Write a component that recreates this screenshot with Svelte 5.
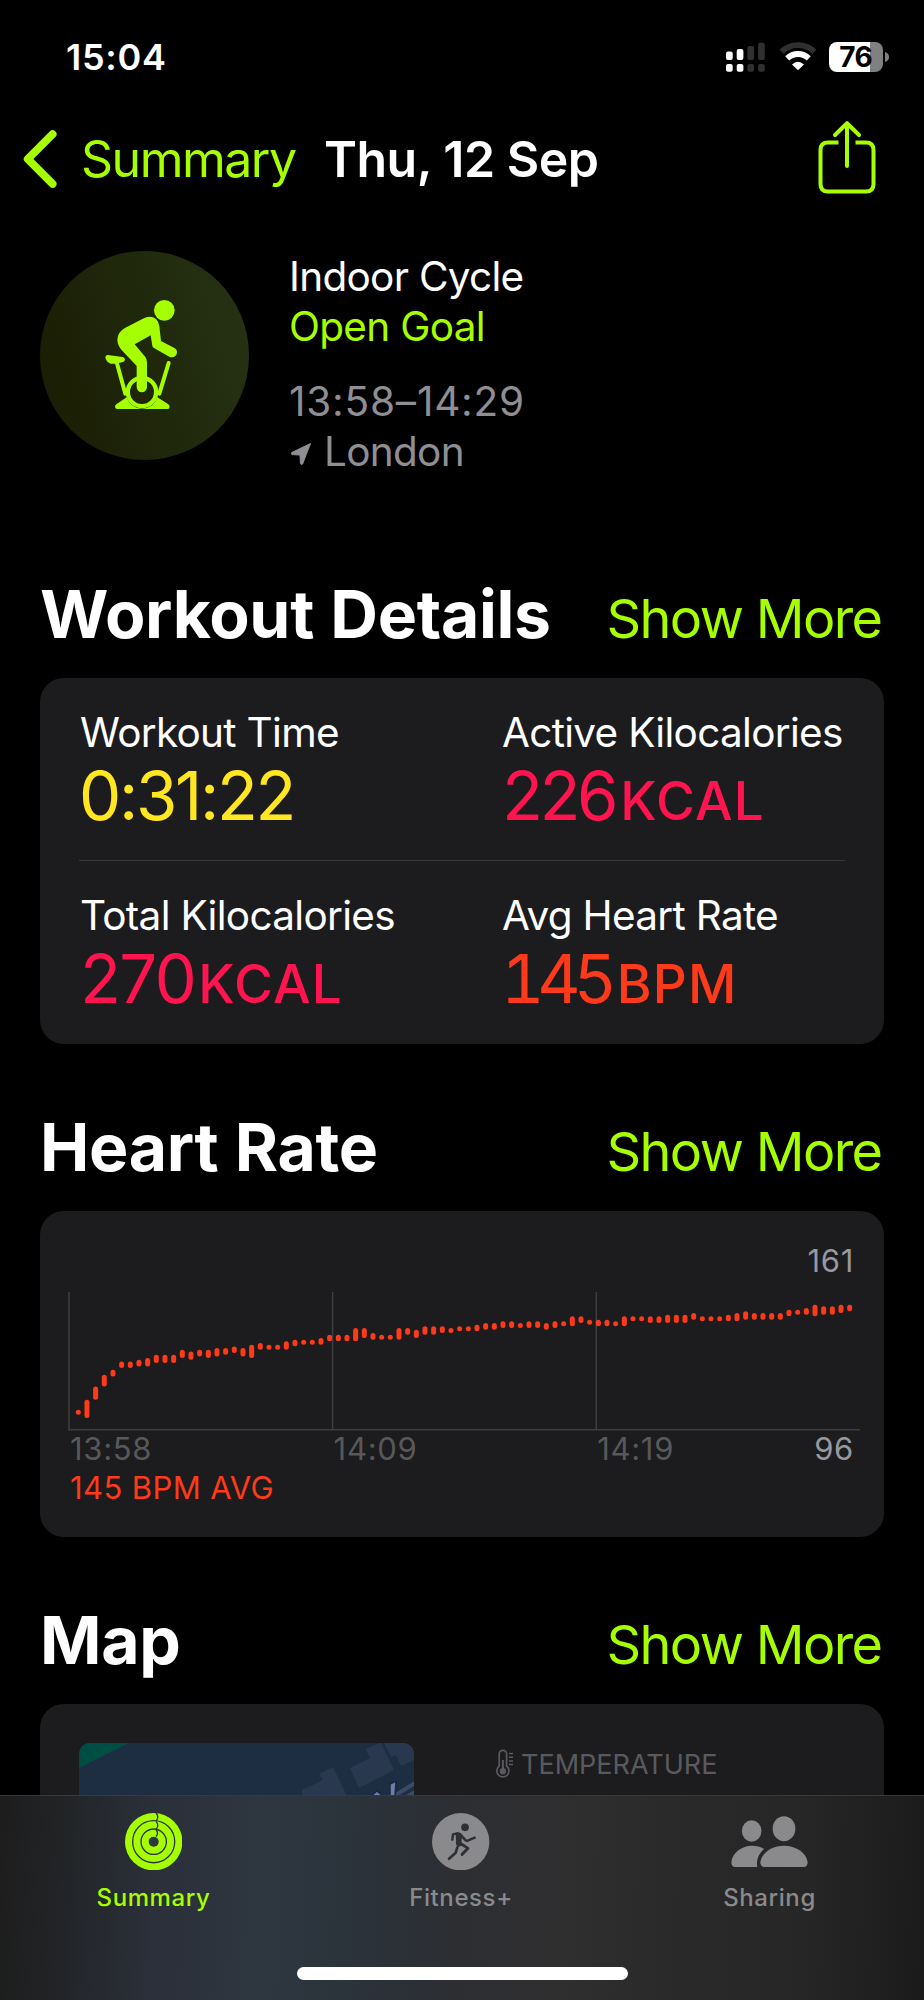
<script lang="ts">
  type Metric = { label: string; value: string; unit?: string; tone: string };

  const metrics: Metric[] = [
    { label: "Workout Time", value: "0:31:22", tone: "yellow" },
    { label: "Active Kilocalories", value: "226", unit: "KCAL", tone: "pink" },
    { label: "Total Kilocalories", value: "270", unit: "KCAL", tone: "pink" },
    { label: "Avg Heart Rate", value: "145", unit: "BPM", tone: "orange" },
  ];

  const maxBpm = 161;

  // [low, high] per sample window
  const samples = [
    [98, 98], [96, 104], [107, 112], [115, 119], [121, 122], [126, 127], [126, 127], [127, 128],
    [127, 129], [129, 131], [129, 131], [129, 131], [132, 134], [131, 133], [133, 134], [132, 134],
    [133, 135], [134, 135], [135, 136], [133, 135], [132, 137], [137, 138], [137, 137], [137, 137],
    [137, 139], [139, 140], [140, 140], [140, 140], [140, 141], [142, 143], [142, 143], [142, 143],
    [142, 147], [144, 147], [143, 144], [143, 143], [143, 143], [143, 147], [146, 147], [144, 146],
    [146, 148], [146, 148], [147, 148], [147, 147], [148, 148], [148, 148], [148, 149], [149, 150],
    [149, 150], [150, 151], [150, 151], [150, 150], [150, 151], [150, 151], [149, 150], [150, 151],
    [151, 151], [151, 154], [153, 154], [152, 152], [151, 152], [151, 152], [151, 151], [151, 154],
    [154, 154], [154, 154], [153, 154], [153, 154], [153, 155], [153, 155], [153, 155], [155, 156],
    [154, 154], [154, 154], [154, 154], [154, 155], [154, 156], [155, 157], [155, 156], [155, 156],
    [155, 156], [155, 156], [157, 158], [158, 158], [158, 159], [157, 161], [158, 160], [158, 160],
    [159, 161], [160, 161],
  ];

  const barX = (i: number) => 7.8 + i * 8.667;
  const barY = (bpm: number) => 12.7 + (maxBpm - bpm) * 1.667;
</script>

<div class="screen">
  <div class="status-bar">
    <span class="clock">15:04</span>
    <div class="status-icons">
      <svg class="signal" viewBox="0 0 39 30">
        <g fill="#fff">
          <rect x="0" y="9.5" width="6.7" height="8.5" rx="2" />
          <rect x="10.7" y="7" width="6.7" height="11" rx="2" />
          <rect x="0" y="22" width="6.7" height="7.8" rx="2" />
          <rect x="10.7" y="22" width="6.7" height="7.8" rx="2" />
        </g>
        <g fill="#303030">
          <rect x="21.4" y="4" width="6.7" height="14" rx="2" />
          <rect x="32.1" y="0.8" width="6.7" height="17.2" rx="2" />
          <rect x="21.4" y="22" width="6.7" height="7.8" rx="2" />
          <rect x="32.1" y="22" width="6.7" height="7.8" rx="2" />
        </g>
      </svg>
      <svg class="wifi" viewBox="0 0 38 30">
        <path d="M2.5 9.6A24 24 0 0 1 35.5 9.6" fill="none" stroke="#303030" stroke-width="5.8" />
        <path d="M8.2 16.4A15.4 15.4 0 0 1 29.8 16.4" fill="none" stroke="#fff" stroke-width="5.8" />
        <path d="M13 22.4Q19 17 25 22.4L19.8 27.6Q19 28.3 18.2 27.6Z" fill="#fff" />
      </svg>
      <div class="battery">
        <span class="battery-level">76</span>
        <svg class="battery-nub" viewBox="0 0 4 10"><path d="M0 0Q4 1.4 4 5T0 10Z" fill="#808080" /></svg>
      </div>
    </div>
  </div>

  <nav class="nav-bar">
    <svg class="chevron" viewBox="0 0 34 58">
      <path d="M29.5 4.2L4.8 29L29.5 53.8" fill="none" stroke="currentColor" stroke-width="8" stroke-linecap="round" stroke-linejoin="round" />
    </svg>
    <span class="back-label">Summary</span>
    <h1>Thu, 12 Sep</h1>
    <svg class="share" viewBox="0 0 58 74">
      <g fill="none" stroke="currentColor" stroke-width="4">
        <path d="M20.5 22.5H10Q2.5 22.5 2.5 30V64Q2.5 71.5 10 71.5H48Q55.5 71.5 55.5 64V30Q55.5 22.5 48 22.5H37.5" />
        <path d="M29 46V3.5M17 15L29 3.2L41 15" stroke-linecap="round" stroke-linejoin="round" />
      </g>
    </svg>
  </nav>

  <div class="workout">
    <div class="workout-icon">
      <svg viewBox="0 0 330 390" fill="currentColor">
        <circle cx="223" cy="58" r="31" />
        <path d="M163 81L106 110Q82 123 82 147Q83 164 95 177L140 225V288A15.5 15.5 0 0 0 171 288V213Q171 205 166 198L134 160L182 133L187 165Q188 169 192 171L238 197Q248 202 257 194Q264 184 259 176Q257 173 253 171L213 150L208 105Q204 79 181 77Q172 77 163 81Z" />
        <path d="M53 192L98 198Q105 200 105 206Q104 213 96 214L80 218H62Q48 213 46 199Q47 192 53 192Z" />
        <path d="M80 214L106 308M236 216L208 308" fill="none" stroke="currentColor" stroke-width="12" stroke-linecap="round" />
        <circle cx="156" cy="303" r="42.5" fill="none" stroke="currentColor" stroke-width="13" />
        <path d="M110 319L79 340Q75 343 75 348Q76 354 82 354H232Q239 354 239 348Q239 343 235 340L202 319A48 48 0 0 1 110 319Z" />
      </svg>
    </div>
    <div class="workout-info">
      <p>Indoor Cycle</p>
      <p class="workout-goal">Open Goal</p>
      <p class="workout-time">13:58–14:29</p>
      <p class="workout-place">
        <svg viewBox="0 0 20 22"><path d="M19.5 .5L.6 9.6Q-.2 11 1 11.6L9 12L9.4 20.5Q10.3 22.4 11.6 21Z" fill="currentColor" stroke="currentColor" /></svg>
        <span>London</span>
      </p>
    </div>
  </div>

  <section>
    <header>
      <h2>Workout Details</h2>
      <span class="show-more">Show More</span>
    </header>
    <div class="card metrics">
      {#each metrics as metric}
        <div class="metric">
          <div class="metric-label">{metric.label}</div>
          <div class="metric-value {metric.tone}" class:tabular={metric.unit}>{metric.value}{#if metric.unit}<span class="unit">{metric.unit}</span>{/if}</div>
        </div>
      {/each}
    </div>
  </section>

  <section>
    <header>
      <h2>Heart Rate</h2>
      <span class="show-more">Show More</span>
    </header>
    <div class="card heart">
      <div class="heart-max">161</div>
      <svg class="plot" viewBox="0 0 792 139">
        <path d="M1 0V138.3M264.6 0V138M528.3 0V138M0 137.8H792" fill="none" stroke="#3e3e40" stroke-width="1.5" />
        {#each samples as [low, high], i}
          <rect x={barX(i)} y={barY(high)} width="5" height={barY(low) - barY(high) + 5} rx="2.5" fill="#ff3a1a" />
        {/each}
      </svg>
      <div class="axis">
        <span>13:58</span>
        <span>14:09</span>
        <span>14:19</span>
        <span class="heart-min">96</span>
      </div>
      <div class="heart-avg">145 BPM AVG</div>
    </div>
  </section>

  <section>
    <header>
      <h2>Map</h2>
      <span class="show-more">Show More</span>
    </header>
    <div class="card map">
      <svg class="map-thumb" viewBox="0 0 335 160">
        <rect width="335" height="160" fill="#1d2d42" />
        <path d="M0 0H50L0 25Z" fill="#004d43" />
        <path d="M287 6L300 0H302L315 27L280 45L271 25L291 15ZM240 31L254 24L268 53H223V47L244 37ZM305 0L312 14L317 12L322 23L335 17V0Z" fill="#29384f" />
        <path d="M317 52L336 40M326 55L336 49" stroke="#3a4b6a" stroke-width="4" />
        <path d="M291 54L298 48L305 54M311 54V41L317 38L316 54Z" fill="#6a80a8" stroke="#1b2440" stroke-width="1.5" />
      </svg>
      <div class="temperature">
        <svg viewBox="0 0 18 30" fill="none" stroke="currentColor" stroke-width="1.7">
          <path d="M3.2 17V5A3.7 3.7 0 0 1 10.6 5V17A6.1 6.1 0 1 1 3.2 17Z" />
          <path d="M6.9 11V20" stroke-width="2" />
          <circle cx="6.9" cy="22.3" r="3.2" fill="currentColor" stroke="none" />
          <path d="M13 4.5H17M13 8.3H17M13 12H17M13 15.5H17" stroke-width="1.4" />
        </svg>
        <span>TEMPERATURE</span>
      </div>
    </div>
  </section>

  <div class="tab-bar">
    <div class="tabs">
      <div class="tab active">
        <svg class="tab-round" viewBox="0 0 172 172">
          <circle cx="86" cy="86" r="86" fill="currentColor" />
          <g fill="none" stroke="#2e3641" stroke-width="4">
            <circle cx="86" cy="86" r="63" />
            <circle cx="86" cy="86" r="38" />
            <path d="M93 0Q103 11 94 23M93 25Q103 36 94 48M93 50Q102 60 93 71" />
          </g>
          <circle cx="86" cy="86" r="15" fill="#2e3641" />
        </svg>
        <span>Summary</span>
      </div>
      <div class="tab">
        <svg class="tab-round" viewBox="21 23 172 172">
          <circle cx="107" cy="109" r="86" fill="currentColor" />
          <circle cx="120" cy="66" r="11.5" fill="#2d3034" />
          <path d="M92 82Q100 79 108 84Q114 89 111 96L109 111L116 119L99 125Q91 119 93 108Z" fill="#2d3034" />
          <g fill="none" stroke="#2d3034" stroke-width="7.5" stroke-linecap="round" stroke-linejoin="round">
            <path d="M97 84L84 87L82 103M109 91L122 105Q124 107 128 106L149 97" />
            <path d="M108 115L129 129L111 147" stroke-width="8.5" />
            <path d="M97 126L92 142L72 160" stroke-width="8" />
          </g>
        </svg>
        <span>Fitness+</span>
      </div>
      <div class="tab">
        <svg class="tab-people" viewBox="806 407 231 154" fill="currentColor">
          <ellipse cx="868" cy="452" rx="29.5" ry="32" />
          <ellipse cx="965" cy="445" rx="34" ry="37.5" />
          <path d="M818 560Q807 559 807 546C810 516 840 496 868 496Q890 496 905 506C890 519 881 538 885 560Z" />
          <path d="M906 560Q894 559 894 546C898 516 930 496 965 496S1032 516 1036 546Q1036 559 1025 560Z" />
        </svg>
        <span>Sharing</span>
      </div>
    </div>
    <div class="home-indicator"></div>
  </div>
</div>

<style>
  :global(body) {
    margin: 0;
    background: #000;
  }

  .screen {
    position: relative;
    width: 924px;
    height: 2000px;
    overflow: hidden;
    background: #000;
    color: #fff;
    font-family: Inter, "Liberation Sans", sans-serif;
  }

  h1,
  h2,
  p {
    margin: 0;
  }

  svg {
    display: block;
    flex: none;
  }

  .status-bar {
    display: flex;
    justify-content: space-between;
    align-items: center;
    height: 114px;
    padding: 0 35px 0 66px;
  }

  .clock {
    font-size: 36px;
    font-weight: 600;
    letter-spacing: 0.7px;
  }

  .status-icons {
    display: flex;
    align-items: center;
  }

  .signal {
    width: 39px;
    height: 30px;
  }

  .wifi {
    width: 38px;
    height: 30px;
    margin: 0 12px 0 13.5px;
  }

  .battery {
    display: flex;
    align-items: center;
    gap: 2px;
  }

  .battery-level {
    width: 54.5px;
    height: 30px;
    border-radius: 8px;
    background: linear-gradient(90deg, #fff 76%, #808080 76%);
    color: #000;
    font-size: 28px;
    font-weight: 700;
    line-height: 30px;
    text-align: center;
    letter-spacing: -0.5px;
  }

  .battery-nub {
    width: 4px;
    height: 10px;
  }

  .nav-bar {
    display: flex;
    align-items: center;
    height: 90px;
    padding: 0 48px 0 23px;
    color: #a6ff00;
  }

  .chevron {
    width: 34px;
    height: 58px;
  }

  .back-label {
    width: 243px;
    margin-left: 24px;
    font-size: 50px;
    letter-spacing: -1.5px;
  }

  h1 {
    flex: 1;
    color: #fff;
    font-size: 50px;
    font-weight: 600;
    letter-spacing: -0.5px;
  }

  .share {
    width: 58px;
    height: 74px;
    margin-bottom: 4px;
  }

  .workout {
    display: flex;
    gap: 40px;
    height: 226px;
    padding: 47px 40px 0;
    margin-bottom: 97px;
  }

  .workout-icon {
    display: flex;
    align-items: center;
    justify-content: center;
    width: 209px;
    height: 209px;
    border-radius: 50%;
    background: linear-gradient(75deg, #191c02, #273315);
    color: #a6ff00;
  }

  .workout-icon svg {
    width: 110px;
    height: 130px;
  }

  .workout-info {
    padding-top: 1px;
    font-size: 40.5px;
    line-height: 50px;
    letter-spacing: -0.7px;
  }

  .workout-goal {
    color: #a6ff00;
  }

  .workout-time {
    margin-top: 25px;
    color: #8e8e93;
    letter-spacing: 0.8px;
  }

  .workout-place {
    display: flex;
    align-items: center;
    gap: 13px;
    padding-left: 2px;
    color: #8e8e93;
  }

  .workout-place svg {
    width: 20px;
    height: 22px;
    margin-top: 3px;
  }

  section {
    padding: 0 40px;
    margin-bottom: 63px;
  }

  header {
    display: flex;
    align-items: baseline;
    justify-content: space-between;
    height: 80px;
    margin-bottom: 24px;
    line-height: 80px;
  }

  h2 {
    font-size: 66px;
    font-weight: 700;
    letter-spacing: -0.3px;
    word-spacing: 1px;
  }

  .show-more {
    padding-right: 2.5px;
    color: #a6ff00;
    font-size: 54px;
    letter-spacing: -1.6px;
  }

  .card {
    box-sizing: border-box;
    border-radius: 24px;
    background: #1c1c1e;
  }

  .metrics {
    display: grid;
    grid-template-columns: 422px 344px;
    grid-template-rows: 183px 183px;
    padding: 0 39px;
  }

  .metric {
    box-sizing: border-box;
    padding: 29.5px 0 0 1px;
    white-space: nowrap;
  }

  .metric:nth-child(-n + 2) {
    border-bottom: 1.5px solid #38383a;
  }

  .metric-label {
    font-size: 40.5px;
    line-height: 50px;
    letter-spacing: -0.7px;
  }

  .metric-value {
    margin: 3.5px 0 0 -1px;
    font-size: 67px;
    line-height: 70px;
    letter-spacing: -2.3px;
  }

  .metric-value.tabular {
    font-variant-numeric: tabular-nums;
    letter-spacing: -6px;
  }

  .metric-value.orange {
    letter-spacing: -7.2px;
  }

  .unit {
    margin-left: 7px;
    font-size: 53px;
    font-weight: 500;
    letter-spacing: 1.2px;
  }

  .yellow {
    color: #ffe620;
  }

  .pink {
    color: #ff1450;
  }

  .orange {
    color: #ff3a1a;
  }

  .heart {
    height: 326px;
    padding: 30px 24px 0 28px;
    font-size: 31px;
    line-height: 40px;
    letter-spacing: 0.7px;
  }

  .heart-max {
    margin-bottom: 11px;
    padding-right: 6px;
    color: #98989f;
    text-align: right;
  }

  .plot {
    width: 792px;
    height: 139px;
  }

  .axis {
    display: grid;
    grid-template-columns: 263.6px 263.6px 1fr auto;
    padding: 0 6px 0 2px;
    margin-top: -2px;
    color: #58585b;
  }

  .heart-min {
    color: #98989f;
  }

  .heart-avg {
    padding-left: 2px;
    line-height: 37px;
    color: #ff3a1a;
    letter-spacing: 0.4px;
  }

  .map {
    display: flex;
    gap: 82px;
    height: 366px;
    padding: 39px;
  }

  .map-thumb {
    width: 335px;
    height: 160px;
    border-radius: 11px;
  }

  .temperature {
    display: flex;
    align-items: center;
    gap: 7px;
    height: 42px;
    color: #5a5a5e;
    font-size: 27px;
  }

  .temperature svg {
    width: 18px;
    height: 30px;
  }

  /* sits over the scrolled content */
  .tab-bar {
    position: absolute;
    right: 0;
    bottom: 0;
    left: 0;
    box-sizing: border-box;
    height: 205px;
    border-top: 1.5px solid #38393c;
    background: linear-gradient(92deg, #1d1d1d 0%, #212325 6%, #2b303a 17%, #2e3640 28%, #2b333b 38%, #2c2e32 49%, #2f2f30 60%, #292929 75%, #262626 87%, #1b1b1b 100%);
  }

  .tabs {
    display: grid;
    grid-template-columns: 307px 308px 309px;
    padding-top: 17px;
    color: #8a8a8c;
  }

  .tab {
    display: flex;
    flex-direction: column;
    align-items: center;
    font-size: 24px;
    font-weight: 500;
    line-height: 30px;
    letter-spacing: 0.6px;
  }

  .tab.active {
    color: #a6ff00;
  }

  .tab-round {
    width: 57.4px;
    height: 57.4px;
    margin-bottom: 13px;
  }

  .tab-people {
    width: 77px;
    height: 51.4px;
    margin: 3px 0 16px;
  }

  .home-indicator {
    width: 331px;
    height: 12.5px;
    margin: 54px auto 0;
    border-radius: 7px;
    background: #fff;
  }
</style>
